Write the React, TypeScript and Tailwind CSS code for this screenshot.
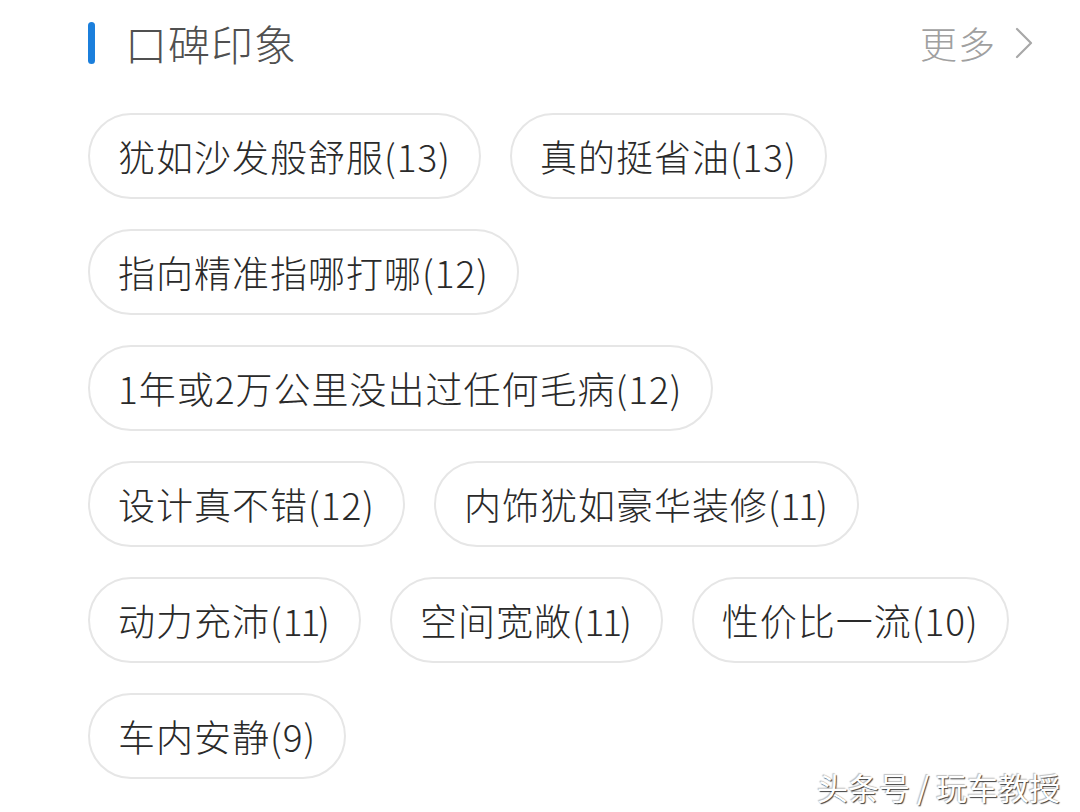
import React from "react";

const rows: string[][] = [
  ["犹如沙发般舒服(13)", "真的挺省油(13)"],
  ["指向精准指哪打哪(12)"],
  ["1年或2万公里没出过任何毛病(12)"],
  ["设计真不错(12)", "内饰犹如豪华装修(11)"],
  ["动力充沛(11)", "空间宽敞(11)", "性价比一流(10)"],
  ["车内安静(9)"],
];

function Label({ t }: { t: string }) {
  if (t.endsWith("(11)")) {
    return (
      <>
        {t.slice(0, -4)}(<span className="tracking-[-2px]">11</span>)
      </>
    );
  }
  return <>{t}</>;
}

export default function App() {
  return (
    <div
      className="relative w-[1080px] h-[812px] bg-white overflow-hidden"
      style={{ fontFamily: '"Noto Sans CJK SC", "Noto Sans", sans-serif' }}
    >
      <div className="flex items-center h-[86px] pl-[88px] pr-[46px]">
        <div className="w-[7px] h-[42px] rounded-full bg-[#1b7fdc]" />
        <div className="ml-[30px] text-[42px] leading-none font-light text-[#505050] tracking-[1px]">口碑印象</div>
        <div className="ml-auto flex items-center text-[#a0a0a0]">
          <span className="text-[37px] leading-none font-light tracking-[1px]">更多</span>
          <svg className="ml-[18px]" width="20" height="32" viewBox="0 0 20 32" fill="none">
            <path d="M3 2 L17 16 L3 30" stroke="#a8a8a8" strokeWidth="2.2" strokeLinecap="round" strokeLinejoin="round" />
          </svg>
        </div>
      </div>
      <div className="flex flex-col gap-[30px] pl-[88px] pt-[27px]">
        {rows.map((row, i) => (
          <div key={i} className="flex gap-[29px]">
            {row.map((t) => (
              <div
                key={t}
                className="h-[86px] flex items-center px-[28px] rounded-full border-2 border-[#e6e6e6] text-[37px] leading-none font-light tracking-[1px] text-[#2a2a2a]"
              >
                <Label t={t} />
              </div>
            ))}
          </div>
        ))}
      </div>
      <div className="absolute right-[20px] bottom-[10px] text-[31px] leading-none text-white [text-shadow:1px_1px_1px_rgba(0,0,0,0.75),-1px_-1px_1px_rgba(0,0,0,0.25)]">
        头条号 / 玩车教授
      </div>
    </div>
  );
}
